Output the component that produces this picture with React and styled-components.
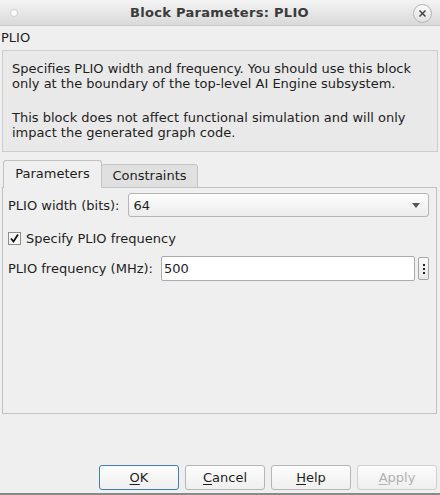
import React from "react";
import styled, { createGlobalStyle } from "styled-components";

const GlobalStyle = createGlobalStyle`
  html, body {
    margin: 0;
    padding: 0;
    background: #efefef;
  }
  body {
    font-family: "DejaVu Sans", "Liberation Sans", sans-serif;
    font-size: 13px;
    color: #1e1e1e;
  }
`;

const Window = styled.div`
  width: 440px;
  height: 495px;
  display: flex;
  flex-direction: column;
  background: #efefef;
  box-sizing: border-box;
  border-bottom: 2px solid #8a8a8a;
`;

const TitleBar = styled.div`
  height: 26px;
  flex: none;
  display: flex;
  align-items: center;
  padding: 0 8px 0 10px;
  background: linear-gradient(#f4f4f4, #d9d9d9);
  border-bottom: 1px solid #c9c9c9;
  box-sizing: border-box;
`;

const Dot = styled.span`
  width: 6px;
  height: 6px;
  border-radius: 50%;
  background: #fbfbfb;
  border: 1px solid #d0d0d0;
`;

const Title = styled.div`
  flex: 1;
  text-align: center;
  font-weight: bold;
  font-size: 13px;
  letter-spacing: 0.3px;
  color: #3a3a3a;
  padding-left: 8px;
`;

const CloseButton = styled.span`
  width: 17px;
  height: 17px;
  border-radius: 50%;
  border: 1px solid #b4b4b4;
  background: linear-gradient(#fafafa, #e2e2e2);
  display: flex;
  align-items: center;
  justify-content: center;
  margin-top: 2px;
`;

const Body = styled.div`
  flex: 1;
  display: flex;
  flex-direction: column;
  padding: 4px 2px 0 2px;
`;

const BlockName = styled.div`
  line-height: 15px;
  margin-left: -1px;
`;

const DescBox = styled.div`
  margin-top: 5px;
  border: 1px solid #cdcdcd;
  background: #e9e9e9;
  padding: 10px 9px 11px 9px;
  line-height: 15px;
`;

const Para = styled.p`
  margin: 0;
  & + & {
    margin-top: 19px;
  }
`;

const TabBar = styled.div`
  margin-top: 8px;
  display: flex;
  align-items: flex-end;
  padding-left: 1px;
  position: relative;
  z-index: 1;
  margin-bottom: -1px;
`;

const Tab = styled.div`
  box-sizing: border-box;
  width: ${(p) => (p.$active ? 99 : 97)}px;
  height: ${(p) => (p.$active ? 28 : 24)}px;
  display: flex;
  align-items: center;
  justify-content: center;
  border: 1px solid #c2c2c2;
  border-bottom: ${(p) => (p.$active ? "none" : "1px solid #c2c2c2")};
  border-radius: 3px 3px 0 0;
  background: ${(p) => (p.$active ? "#efefef" : "#e0e0e0")};
  margin-left: ${(p) => (p.$active ? 0 : -1)}px;
  padding-bottom: ${(p) => (p.$active ? 2 : 1)}px;
`;

const Panel = styled.div`
  height: 227px;
  width: 435px;
  box-sizing: border-box;
  border: 1px solid #c2c2c2;
  padding: 5px 7px 0 5px;
  display: flex;
  flex-direction: column;
`;

const Row = styled.div`
  display: flex;
  align-items: center;
  height: ${(p) => p.$h || 24}px;
  margin-top: ${(p) => p.$mt || 0}px;
`;

const Label = styled.span`
  white-space: nowrap;
  margin-right: 8px;
`;

const Select = styled.div`
  flex: 1;
  height: 24px;
  box-sizing: border-box;
  border: 1px solid #b5b5b5;
  border-radius: 3px;
  background: linear-gradient(#fdfdfd, #ececec);
  display: flex;
  align-items: center;
  padding: 0 8px 0 5px;
  justify-content: space-between;
`;

const Arrow = styled.span`
  width: 0;
  height: 0;
  border-left: 4px solid transparent;
  border-right: 4px solid transparent;
  border-top: 5px solid #555;
`;

const CheckBox = styled.span`
  width: 13px;
  height: 13px;
  box-sizing: border-box;
  border: 1px solid #8c8c8c;
  background: #f8f8f8;
  display: flex;
  align-items: center;
  justify-content: center;
  margin: 0 5px 0 0;
`;

const TextField = styled.div`
  flex: 1;
  height: 25px;
  box-sizing: border-box;
  border: 1px solid #ababab;
  border-radius: 2px;
  background: #ffffff;
  display: flex;
  align-items: center;
  padding-left: 2px;
`;

const MoreButton = styled.span`
  width: 11px;
  height: 23px;
  box-sizing: border-box;
  margin-left: 3px;
  border: 1px solid #a5a5a5;
  border-radius: 2px;
  background: linear-gradient(#fafafa, #e8e8e8);
  display: flex;
  flex-direction: column;
  align-items: center;
  justify-content: center;
  gap: 2px;
  i {
    width: 2px;
    height: 2px;
    background: #222;
  }
`;

const ButtonBar = styled.div`
  margin-top: auto;
  display: flex;
  justify-content: flex-end;
  gap: 6px;
  padding: 0 1px 3px 0;
`;

const Button = styled.button`
  width: 80px;
  height: 25px;
  box-sizing: border-box;
  font-family: inherit;
  font-size: 13px;
  border-radius: 3px;
  border: 1px solid ${(p) => (p.$default ? "#3f7fb5" : p.disabled ? "#cfcfcf" : "#b6b6b6")};
  background: linear-gradient(#fcfcfc, #efefef);
  color: ${(p) => (p.disabled ? "#b2b2b2" : "#1e1e1e")};
  padding: 0;
  u {
    text-decoration-thickness: 1px;
    text-underline-offset: 2px;
  }
`;

export default function App() {
  return (
    <Window>
      <GlobalStyle />
      <TitleBar>
        <Dot />
        <Title>Block Parameters: PLIO</Title>
        <CloseButton>
          <svg width="9" height="9" viewBox="0 0 9 9">
            <path d="M1.5 1.5 L7.5 7.5 M7.5 1.5 L1.5 7.5" stroke="#444" strokeWidth="1.5" />
          </svg>
        </CloseButton>
      </TitleBar>
      <Body>
        <BlockName>PLIO</BlockName>
        <DescBox>
          <Para>
            Specifies PLIO width and frequency. You should use this block only at the boundary of the
            top-level AI Engine subsystem.
          </Para>
          <Para>
            This block does not affect functional simulation and will only impact the generated graph
            code.
          </Para>
        </DescBox>
        <TabBar>
          <Tab $active>Parameters</Tab>
          <Tab>Constraints</Tab>
        </TabBar>
        <Panel>
          <Row>
            <Label>PLIO width (bits):</Label>
            <Select>
              <span>64</span>
              <Arrow />
            </Select>
          </Row>
          <Row $h={14} $mt={14}>
            <CheckBox>
              <svg width="11" height="11" viewBox="0 0 11 11">
                <path d="M2 5.5 L4.5 8.5 L9 1.5" fill="none" stroke="#111" strokeWidth="1.8" />
              </svg>
            </CheckBox>
            <span>Specify PLIO frequency</span>
          </Row>
          <Row $h={25} $mt={11}>
            <Label>PLIO frequency (MHz):</Label>
            <TextField>500</TextField>
            <MoreButton>
              <i />
              <i />
              <i />
            </MoreButton>
          </Row>
        </Panel>
        <ButtonBar>
          <Button $default>
            <u>O</u>K
          </Button>
          <Button>
            <u>C</u>ancel
          </Button>
          <Button>
            <u>H</u>elp
          </Button>
          <Button disabled>
            <u>A</u>pply
          </Button>
        </ButtonBar>
      </Body>
    </Window>
  );
}
